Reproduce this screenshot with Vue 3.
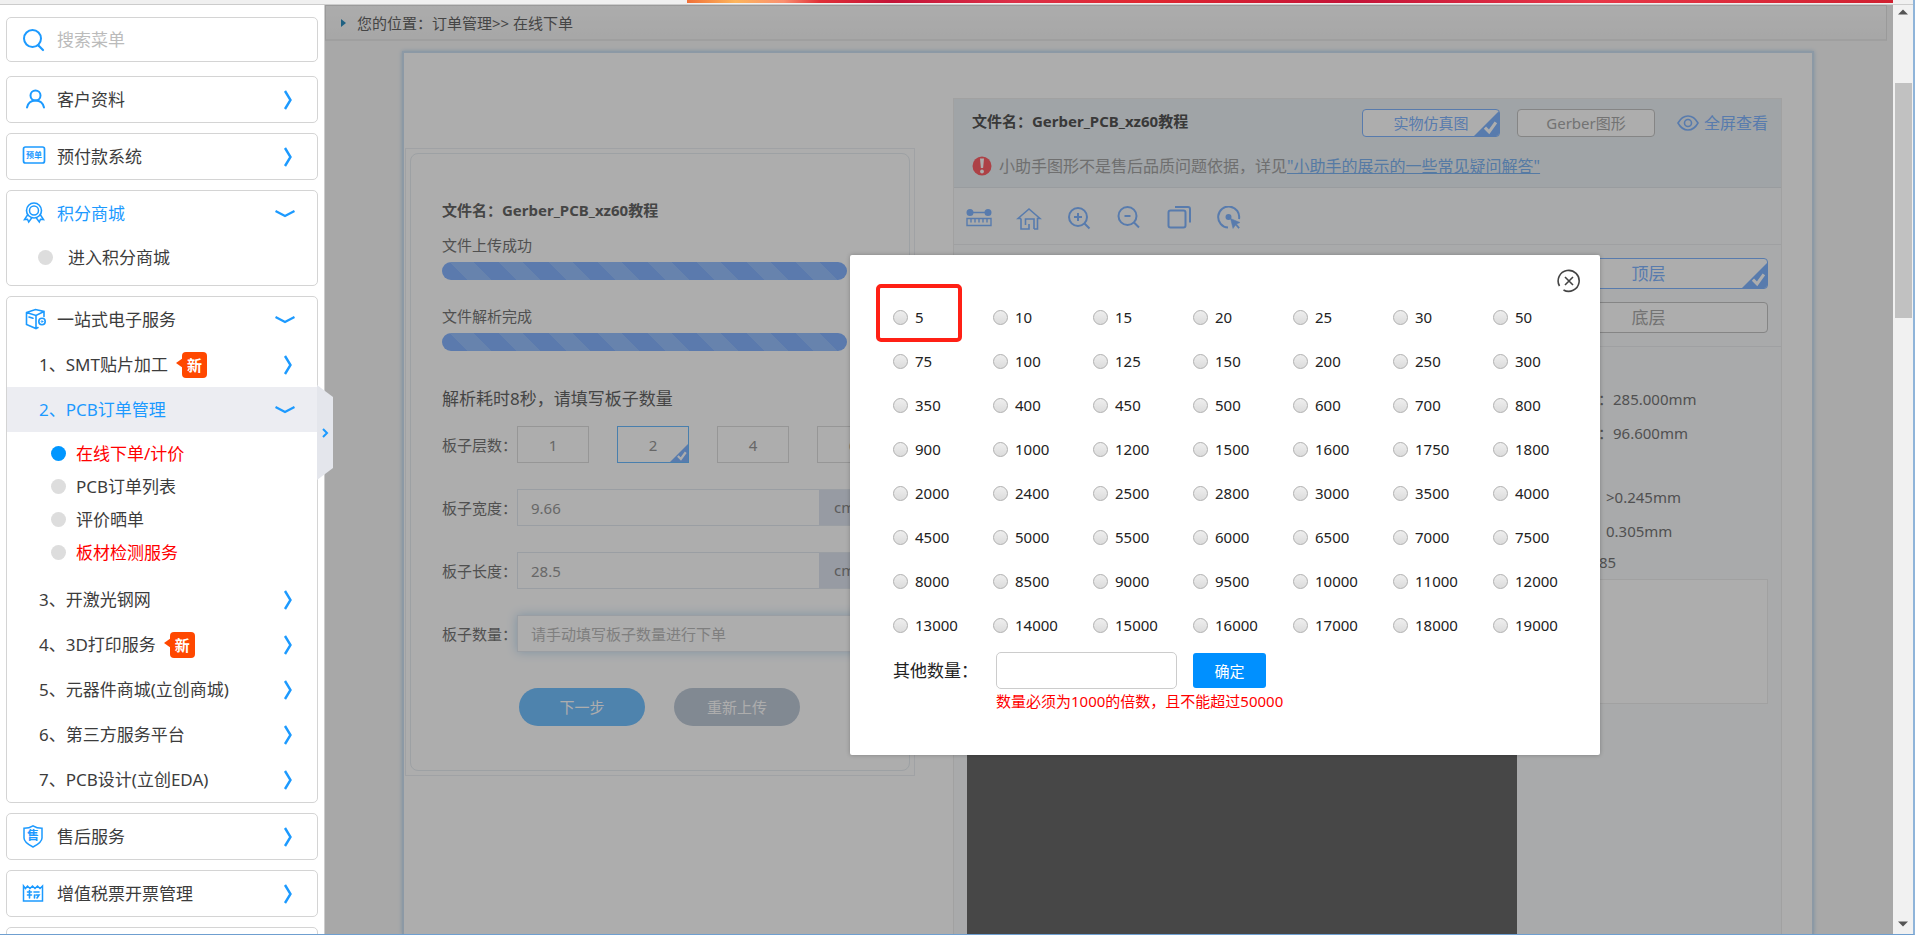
<script setup>
import { ref } from 'vue'

const keyword = ref('')
const quantity = ref(null)
const otherQuantity = ref('')
const width = ref('9.66')
const length = ref('28.5')
const boardCount = ref('')

const quantities = [
  5, 10, 15, 20, 25, 30, 50,
  75, 100, 125, 150, 200, 250, 300,
  350, 400, 450, 500, 600, 700, 800,
  900, 1000, 1200, 1500, 1600, 1750, 1800,
  2000, 2400, 2500, 2800, 3000, 3500, 4000,
  4500, 5000, 5500, 6000, 6500, 7000, 7500,
  8000, 8500, 9000, 9500, 10000, 11000, 12000,
  13000, 14000, 15000, 16000, 17000, 18000, 19000,
]

const services = [
  { text: '1、SMT贴片加工', fresh: true },
  {
    text: '2、PCB订单管理',
    open: true,
    children: [
      { text: '在线下单/计价', red: true, current: true },
      { text: 'PCB订单列表' },
      { text: '评价晒单' },
      { text: '板材检测服务', red: true },
    ],
  },
  { text: '3、开激光钢网' },
  { text: '4、3D打印服务', fresh: true },
  { text: '5、元器件商城(立创商城)' },
  { text: '6、第三方服务平台' },
  { text: '7、PCB设计(立创EDA)' },
]

const layers = [1, 2, 4, 6]
const layer = ref(2)
</script>

<template>
  <div class="app">
    <div class="strip"><div class="banner"></div></div>

    <div class="body">
      <nav class="sidebar">
        <label class="card search">
          <svg class="ico" viewBox="0 0 24 24"><circle cx="10.500" cy="10.500" r="8.500" stroke-width="2" /><path d="M16.500 17.500l4.500 4.500" stroke-width="2.200" /></svg>
          <input v-model="keyword" type="text" placeholder="搜索菜单" aria-label="搜索菜单" />
        </label>

        <div class="card">
          <button class="head">
            <svg class="ico" viewBox="0 0 24 24"><circle cx="13.500" cy="7.500" r="5" stroke-width="2" /><path d="M5 19.500c1-4.500 4.500-7 8.500-7s7.500 2.500 8.500 7" stroke-width="2" /></svg>
            <span>客户资料</span>
            <svg class="chev" viewBox="0 0 20 20"><path d="M8 1l5.500 9L8 19" /></svg>
          </button>
        </div>

        <div class="card">
          <button class="head">
            <svg class="ico" viewBox="0 0 24 24"><rect x="1.500" y="2" width="21" height="16" rx="2" stroke-width="1.700" /><text x="12" y="13" text-anchor="middle" class="glyph small">预单</text></svg>
            <span>预付款系统</span>
            <svg class="chev" viewBox="0 0 20 20"><path d="M8 1l5.500 9L8 19" /></svg>
          </button>
        </div>

        <div class="card points">
          <button class="head active">
            <svg class="ico" viewBox="0 0 24 24"><circle cx="12" cy="8.500" r="7.500" stroke-width="1.600" /><circle cx="12" cy="8.500" r="4.500" stroke-width="1.500" /><path d="M5.500 13l-3 4.500 3-.3 1.200 2.800 3.300-4.500M18.500 13l3 4.500-3-.3-1.200 2.800-3.300-4.500" stroke-width="1.500" /></svg>
            <span>积分商城</span>
            <svg class="chev down" viewBox="0 0 20 20"><path d="M.5 7l9.500 5 9.500-5" /></svg>
          </button>
          <a href="#" class="entry"><i class="dot"></i>进入积分商城</a>
        </div>

        <div class="card">
          <button class="head">
            <svg class="ico" viewBox="0 0 24 24"><path d="M4.500 4.500l9-3 8.500 2v5M4.500 4.500v12l9.500 4 2-1M4.500 4.500l9.500 3 8-4M14 7.500v12M7 9l4 1.300" stroke-width="1.600" /><circle cx="20" cy="13.500" r="3.200" stroke-width="1.600" /><circle cx="20" cy="13.500" r=".8" stroke-width="1" /></svg>
            <span>一站式电子服务</span>
            <svg class="chev down" viewBox="0 0 20 20"><path d="M.5 7l9.500 5 9.500-5" /></svg>
          </button>
          <template v-for="s in services" :key="s.text">
            <button class="item" :class="{ active: s.open }">
              <span>{{ s.text }}</span>
              <em v-if="s.fresh" class="fresh">新</em>
              <svg v-if="s.open" class="chev down" viewBox="0 0 20 20"><path d="M.5 7l9.500 5 9.500-5" /></svg>
              <svg v-else class="chev" viewBox="0 0 20 20"><path d="M8 1l5.500 9L8 19" /></svg>
            </button>
            <div v-if="s.children" class="children">
              <a v-for="c in s.children" :key="c.text" href="#" :class="{ red: c.red }">
                <i class="dot" :class="{ on: c.current }"></i>{{ c.text }}
              </a>
            </div>
          </template>
        </div>

        <div class="card">
          <button class="head">
            <svg class="ico" viewBox="0 0 24 24"><path d="M11 .8c3 2 6 2.500 9 2.500v9.700c0 4-4 6.500-9 9-5-2.500-9-5-9-9V3.300c3 0 6-.5 9-2.500z" stroke-width="1.500" /><text x="11" y="15" text-anchor="middle" class="glyph">售</text></svg>
            <span>售后服务</span>
            <svg class="chev" viewBox="0 0 20 20"><path d="M8 1l5.500 9L8 19" /></svg>
          </button>
        </div>

        <div class="card">
          <button class="head">
            <svg class="ico" viewBox="0 0 24 24"><path d="M1.500 4v15h19V4L18 6.500 15.500 4 13 6.500 10.500 4 8 6.500 5.500 4 3.500 6.500z" stroke-width="1.500" /><path d="M5.500 10h4M5.500 13h4M7.500 8.500v7.500M12 10h5M14 13h3l-2 3M12.500 13v3" stroke-width="1.600" /></svg>
            <span>增值税票开票管理</span>
            <svg class="chev" viewBox="0 0 20 20"><path d="M8 1l5.500 9L8 19" /></svg>
          </button>
        </div>

        <div class="card"><button class="head" aria-label="更多"></button></div>

        <button class="fold" aria-label="收起菜单">
          <svg viewBox="0 0 10 12"><path d="M3 2l4 4-4 4" /></svg>
        </button>
      </nav>

      <main class="main">
        <div class="crumb"><i class="tri"></i>您的位置：订单管理&gt;&gt; 在线下单</div>

        <div class="sheet">
          <section class="left">
            <form class="upload" @submit.prevent>
              <h2>文件名：Gerber_PCB_xz60教程</h2>
              <p class="state">文件上传成功</p>
              <div class="bar"></div>
              <p class="state second">文件解析完成</p>
              <div class="bar"></div>
              <p class="hint">解析耗时8秒，请填写板子数量</p>

              <div class="fields">
                <div class="row">
                  <span class="lab">板子层数：</span>
                  <div class="layers">
                    <button v-for="n in layers" :key="n" type="button" :class="{ on: n === layer }">
                      {{ n }}
                      <svg v-if="n === layer" class="tick" viewBox="0 0 24 24"><path class="fill" d="M24 0v24H0z" /><path class="mark" d="M10.500 16l4 4 6.500-9" /></svg>
                    </button>
                  </div>
                </div>
                <div class="row">
                  <label class="lab" for="bw">板子宽度：</label>
                  <div class="field"><input id="bw" v-model="width" type="text" /><span>cm</span></div>
                </div>
                <div class="row">
                  <label class="lab" for="bl">板子长度：</label>
                  <div class="field"><input id="bl" v-model="length" type="text" /><span>cm</span></div>
                </div>
                <div class="row">
                  <label class="lab" for="bc">板子数量：</label>
                  <div class="field glow"><input id="bc" v-model="boardCount" type="text" placeholder="请手动填写板子数量进行下单" /></div>
                </div>
              </div>

              <div class="actions">
                <button class="next">下一步</button>
                <button type="button" class="again">重新上传</button>
              </div>
            </form>
          </section>

          <section class="panel">
            <header>
              <div class="line">
                <h2>文件名：Gerber_PCB_xz60教程</h2>
                <div class="tabs">
                  <button class="tab on">实物仿真图<svg class="tick" viewBox="0 0 24 24"><path class="fill" d="M24 0v24H0z" /><path class="mark" d="M10.500 16l4 4 6.500-9" /></svg></button>
                  <button class="tab">Gerber图形</button>
                </div>
                <a href="#" class="full">
                  <svg viewBox="0 0 22 18"><path d="M1 9c2.500-4.500 6-7 10-7s7.500 2.500 10 7c-2.500 4.500-6 7-10 7S3.500 13.500 1 9z" /><circle cx="11" cy="9" r="3.500" /></svg>全屏查看
                </a>
              </div>
              <p class="note">
                <svg viewBox="0 0 20 20"><circle cx="10" cy="10" r="9.500" /><path d="M8 2.500h4l-.9 9.500H8.900z" /><circle class="pt" cx="10" cy="15.500" r="1.900" /></svg>
                <span>小助手图形不是售后品质问题依据，详见<a href="#">"小助手的展示的一些常见疑问解答"</a></span>
              </p>
            </header>

            <div class="tools">
              <button aria-label="测量"><svg viewBox="0 0 26 26"><path d="M4 6.500h18M1 12.500h24v7H1zM5 13v3.500M9 13v3.500M13 13v3.500M17 13v3.500M21 13v3.500" stroke-width="1.400" /><circle class="solid" cx="4" cy="6.500" r="2.500" /><circle class="solid" cx="22" cy="6.500" r="2.500" /></svg></button>
              <button aria-label="主页"><svg viewBox="0 0 26 26"><path d="M5 12.500H2L13 3l11 9.500h-2.500V23H18M5 12.500V23h8v-5M9.500 19v-6H18v10" stroke-width="1.600" /></svg></button>
              <button aria-label="放大"><svg viewBox="0 0 26 26"><circle cx="12" cy="11" r="9" /><path d="M18.500 17.500l5 5M12 7v8M8 11h8" /></svg></button>
              <button aria-label="缩小"><svg viewBox="0 0 26 26"><circle cx="11.500" cy="10" r="9" /><path d="M18 16.500l5 5M8.500 10h6" /></svg></button>
              <button aria-label="图层"><svg viewBox="0 0 26 26"><rect x="2.500" y="4.500" width="17" height="17" rx="2" /><path d="M9 1h13a2 2 0 0 1 2 2v13.500" /></svg></button>
              <button aria-label="选择"><svg viewBox="0 0 26 26"><path d="M23 13A10.500 10.500 0 1 0 12 21.500" /><circle class="solid" cx="12.500" cy="11" r="2" /><path class="solid" d="M14.500 12.500l2.500 10 2.500-3.500 3 3.500 1-1-3-3.500 3.500-1.500z" stroke-width=".5" /></svg></button>
            </div>

            <div class="view">
              <div class="canvas"></div>
              <aside>
                <div class="sides">
                  <button class="tab on">顶层<svg class="tick" viewBox="0 0 24 24"><path class="fill" d="M24 0v24H0z" /><path class="mark" d="M10.500 16l4 4 6.500-9" /></svg></button>
                  <button class="tab">底层</button>
                </div>
                <dl class="size">
                  <div><dt>长度：</dt><dd>285.000mm</dd></div>
                  <div><dt>宽度：</dt><dd>96.600mm</dd></div>
                </dl>
                <dl class="spec">
                  <div><dt>线宽：</dt><dd>&gt;0.245mm</dd></div>
                  <div><dt>孔径：</dt><dd>0.305mm</dd></div>
                  <div class="count"><dt>孔数：</dt><dd>85</dd></div>
                </dl>
                <div class="memo"></div>
              </aside>
            </div>
          </section>
        </div>
        <div class="shade"></div>
      </main>

      <div class="scroll">
        <svg viewBox="0 0 10 6"><path d="M0 5.500l5-5 5 5z" /></svg>
        <div class="thumb"></div>
        <svg viewBox="0 0 10 6"><path d="M0 .5l5 5 5-5z" /></svg>
      </div>
    </div>

    <form class="dialog" role="dialog" aria-label="板子数量" @submit.prevent>
      <button type="button" class="close" aria-label="关闭">
        <svg viewBox="0 0 24 24"><path d="M2.500 17A10.500 10.500 0 1 1 6.500 21" /><path d="M8 8l8 8M16 8l-8 8" /></svg>
      </button>
      <div class="grid">
        <label v-for="q in quantities" :key="q" :class="{ marked: q === 5 }">
          <input v-model="quantity" type="radio" name="quantity" :value="q" /><span>{{ q }}</span>
        </label>
      </div>
      <div class="other">
        <label for="oq">其他数量：</label>
        <input id="oq" v-model="otherQuantity" type="text" />
        <button>确定</button>
      </div>
      <p class="warn">数量必须为1000的倍数，且不能超过50000</p>
    </form>
  </div>
</template>

<style>
body {
  margin: 0;
  overflow: hidden;
}
</style>

<style scoped>
*,
*::before {
  box-sizing: border-box;
}
.app {
  position: relative;
  display: flex;
  flex-direction: column;
  height: 100vh;
  overflow: hidden;
  border-right: 2px solid #8fb4d9;
  border-bottom: 1px solid #6f9fd0;
  font: 15px/24px "Noto Sans", "Noto Sans CJK SC", sans-serif;
  color: #3c3c3c;
  background: #fff;
}
button,
input {
  font: inherit;
  color: inherit;
  margin: 0;
}
button {
  padding: 0;
  border: 0;
  background: none;
}
a {
  color: inherit;
  text-decoration: none;
}
p,
h2,
dl,
dd {
  margin: 0;
}
svg {
  display: block;
  flex: none;
  fill: none;
}

.strip {
  flex: none;
  display: flex;
  justify-content: flex-end;
  height: 5px;
  padding-right: 20px;
  background: #f0f0f0;
  border-bottom: 1px solid #ccc;
}
.banner {
  flex: none;
  width: calc(100% - 687px);
  height: 3px;
  background: linear-gradient(90deg, #f07038, #fdb55c 4%, #fa9070 8%, #e03038 11%, #c41438 17%, #dc3048 27%, #e02830 38%, #c41438 55%, #e83848 75%, #d02030);
}
.body {
  flex: 1;
  display: flex;
  min-height: 0;
}

.sidebar {
  position: relative;
  flex: none;
  display: flex;
  flex-direction: column;
  gap: 10px;
  width: 325px;
  padding: 12px 6px 0;
  border-right: 1px solid #ccc;
  font-size: 17px;
}
.card {
  flex: none;
  border: 1px solid #d4d4d4;
  border-radius: 5px;
}
.search {
  display: flex;
  align-items: center;
  height: 45px;
  margin-bottom: 4px;
  padding-left: 15px;
}
.search input {
  flex: 1;
  min-width: 0;
  padding: 0;
  border: 0;
  outline: 0;
}
.search input::placeholder {
  color: #bbb;
}
.search .ico,
.head .ico {
  width: 24px;
  height: 24px;
  margin-right: 11px;
}
.ico {
  stroke: #1c9aff;
  stroke-linecap: round;
}
.glyph {
  fill: #1c9aff;
  stroke: none;
  font-size: 12px;
  font-weight: bold;
}
.glyph.small {
  font-size: 8px;
}
.head,
.item {
  display: flex;
  align-items: center;
  width: 100%;
  height: 45px;
  padding: 0 20px 0 15px;
  text-align: left;
}
.item {
  padding-left: 32px;
}
.active {
  color: #1c9aff;
}
.item.active {
  background: #ecedf2;
}
.chev {
  width: 20px;
  height: 20px;
  margin-left: auto;
  stroke: #1c9aff;
  stroke-width: 2.4;
}
.chev.down {
  margin-right: 2px;
}
.dot {
  width: 15px;
  height: 15px;
  border-radius: 50%;
  background: #ddd;
}
.dot.on {
  background: #0096ff;
}
.points {
  padding-bottom: 6px;
}
.entry {
  display: flex;
  align-items: center;
  gap: 15px;
  height: 43px;
  padding-left: 31px;
}
.fresh {
  position: relative;
  width: 25px;
  height: 26px;
  margin-left: 14px;
  border-radius: 4px;
  background: #ff4800;
  color: #fff;
  font: bold 15px/26px "Noto Sans CJK SC", sans-serif;
  text-align: center;
}
.fresh::before {
  content: "";
  position: absolute;
  top: 6px;
  left: -6px;
  border: solid transparent;
  border-width: 5px 7px 5px 0;
  border-right-color: #ff4800;
}
.children {
  padding: 5px 0 8px 44px;
}
.children a {
  display: flex;
  align-items: center;
  gap: 10px;
  height: 33px;
}
.children .red {
  color: #f00;
}
.fold {
  position: absolute;
  z-index: 2;
  top: 380px;
  right: -9px;
  display: grid;
  place-items: center;
  width: 16px;
  height: 95px;
  background: #e4e6ec;
  clip-path: polygon(0 0, 100% 12px, 100% 83px, 0 100%);
}
.fold svg {
  width: 10px;
  height: 12px;
  stroke: #1c9aff;
  stroke-width: 2;
}

.main {
  position: relative;
  flex: 1;
  min-width: 0;
  display: flex;
  flex-direction: column;
  background: #f8f8f8;
}
.shade {
  position: absolute;
  inset: 0;
  background: rgba(0, 0, 0, 0.32);
}
.crumb {
  flex: none;
  display: flex;
  align-items: center;
  height: 36px;
  margin-right: 6px;
  padding-left: 15px;
  border: 1px solid #e4e4e4;
  border-bottom: 2px solid #ebebeb;
  background: linear-gradient(#fefefe, #f6f6f6);
  color: #666;
}
.tri {
  margin-right: 11px;
  border: solid transparent;
  border-width: 4px 0 4px 5px;
  border-left-color: #2f8fc0;
}
.sheet {
  flex: 1;
  display: flex;
  align-items: stretch;
  min-height: 0;
  margin: 10px 79px 0 77px;
  padding: 0 30px 0 1px;
  border: 2px solid #cfe2f4;
  border-bottom: 0;
  box-shadow: 0 0 4px #b9d5ee;
  background: #fff;
  color: #777;
}
.left {
  flex: none;
  align-self: flex-start;
  width: 510px;
  margin-top: 95px;
  padding: 4px;
  border: 1px solid #eceff4;
}
.upload {
  padding: 44px 30px 44px 31px;
  border: 1px solid #e8edf2;
  border-radius: 8px;
}
h2 {
  font-size: 15px;
  line-height: 24px;
  color: #666;
}
.state {
  margin: 11px 0 5px;
}
.state.second {
  margin-top: 24px;
}
.bar {
  width: 405px;
  height: 18px;
  border-radius: 9px;
  background: repeating-linear-gradient(45deg, #86b4ff 0 18px, #99c1ff 18px 35px);
}
.hint {
  margin: 36px 0 15px;
  font-size: 17px;
  color: #666;
}
.fields {
  display: flex;
  flex-direction: column;
  gap: 26px;
}
.row {
  display: flex;
  align-items: center;
  height: 37px;
}
.lab {
  flex: none;
  width: 75px;
}
.layers {
  display: flex;
  gap: 28px;
}
.layers button {
  position: relative;
  width: 72px;
  height: 37px;
  border: 1px solid #ddd;
  color: #999;
}
.layers .on {
  border-color: #6cbcff;
}
.tick {
  position: absolute;
  right: 0;
  bottom: 0;
  width: 18px;
  height: 18px;
}
.tick .fill {
  fill: #82b6ff;
}
.tick .mark {
  stroke: #fff;
  stroke-width: 3;
}
.field {
  display: flex;
  width: 363px;
  height: 37px;
  border: 1px solid #e3e9f0;
}
.field input {
  flex: 1;
  min-width: 0;
  padding: 0 13px;
  border: 0;
  outline: 0;
  background: #fff;
  color: #999;
}
.field input::placeholder {
  color: #bbb;
}
.field span {
  width: 59px;
  padding-left: 15px;
  line-height: 35px;
  background: #dfe5f0;
  color: #888;
}
.field.glow {
  box-shadow: 0 0 10px #bcd8f0;
}
.actions {
  display: flex;
  gap: 29px;
  margin-top: 36px;
  padding-left: 77px;
}
.actions button {
  width: 126px;
  height: 38px;
  border-radius: 19px;
  background: #73c1ff;
  color: #fff;
}
.actions .again {
  background: #bfcad8;
}

.panel {
  flex: 1;
  min-width: 0;
  display: flex;
  flex-direction: column;
  margin: 45px 0 0 38px;
  border: 1px solid #eee;
  border-bottom: 0;
  background: #f9fbfd;
}
.panel header {
  flex: none;
  height: 89px;
  padding: 10px 13px 0 18px;
  border-bottom: 1px solid #e2e6ea;
  background: #ecf2f6;
}
.panel h2 {
  align-self: flex-start;
  color: #555;
}
.line {
  display: flex;
  align-items: center;
  height: 28px;
}
.tabs {
  display: flex;
  gap: 17px;
  margin-left: auto;
}
.tab {
  position: relative;
  width: 138px;
  height: 28px;
  border: 1px solid #c4c4c4;
  border-radius: 4px;
  overflow: hidden;
  background: #fff;
  color: #aaa;
}
.tab.on {
  border-color: #82b6ff;
  color: #82b6ff;
}
.tab .tick {
  width: 25px;
  height: 25px;
}
.full {
  display: flex;
  align-items: center;
  gap: 5px;
  margin-left: 22px;
  font-size: 16px;
  color: #82b6ff;
}
.full svg {
  width: 22px;
  height: 18px;
  stroke: #82b6ff;
  stroke-width: 1.6;
}
.note {
  display: flex;
  align-items: center;
  gap: 7px;
  margin-top: 17px;
  font-size: 16px;
  line-height: 24px;
  color: #a4a4a4;
}
.note svg {
  width: 20px;
  height: 20px;
  fill: #fff;
}
.note svg circle:first-child {
  fill: #ff6068;
}
.note a {
  color: #7eb4f2;
  text-decoration: underline;
}
.tools {
  flex: none;
  display: flex;
  align-items: center;
  gap: 24px;
  height: 57px;
  padding: 6px 0 0 12px;
  border-bottom: 1px solid #eaecef;
}
.tools svg {
  width: 26px;
  height: 26px;
  stroke: #82b6ff;
  stroke-width: 2;
}
.solid {
  fill: #82b6ff;
}
.view {
  flex: 1;
  display: flex;
  min-height: 0;
}
.canvas {
  flex: 1;
  margin: 12px 12px 0 13px;
  background: #696969;
}
aside {
  width: 252px;
}
.sides {
  display: flex;
  flex-direction: column;
  gap: 13px;
  padding: 13px 13px 13px 0;
  border-bottom: 1px solid #eaecef;
}
.sides .tab {
  width: 100%;
  height: 31px;
  font-size: 17px;
}
dl > div {
  display: flex;
  height: 34px;
  line-height: 34px;
}
dt {
  flex: none;
  width: 77px;
  text-align: right;
}
.size {
  padding-top: 35px;
}
.size dt {
  width: 84px;
}
.spec {
  padding-top: 30px;
}
.spec .count {
  height: 31px;
  line-height: 28px;
}
.count dt {
  width: 70px;
}
.memo {
  height: 125px;
  margin-right: 13px;
  border: 1px solid #eee;
  background: #fff;
}

.scroll {
  flex: none;
  display: flex;
  flex-direction: column;
  align-items: center;
  width: 20px;
  padding: 4px 0 7px;
  background: #f1f1f1;
}
.scroll svg {
  width: 10px;
  height: 6px;
  fill: #555;
}
.thumb {
  width: 17px;
  height: 235px;
  margin: 68px 0 auto;
  background: #c1c1c1;
}

.dialog {
  position: absolute;
  z-index: 5;
  top: 255px;
  left: 850px;
  width: 750px;
  padding: 40px 8px 42px 43px;
  border-radius: 2px;
  background: #fff;
  box-shadow: 0 0 4px rgba(0, 0, 0, 0.25);
  color: #222;
}
.close {
  position: absolute;
  top: 14px;
  right: 19px;
}
.close svg {
  width: 24px;
  height: 24px;
  stroke: #444;
  stroke-width: 1.6;
}
.grid {
  display: grid;
  grid-template-columns: repeat(7, 100px);
  grid-auto-rows: 44px;
}
.grid label {
  position: relative;
  display: flex;
  align-items: center;
  gap: 7px;
}
.grid input {
  appearance: none;
  width: 15px;
  height: 15px;
  border: 1px solid #b0b0b0;
  border-radius: 50%;
  background: linear-gradient(#eee, #dcdcdc);
}
.marked::before {
  content: "";
  position: absolute;
  top: -11px;
  left: -17px;
  width: 86px;
  height: 58px;
  border: 4px solid #ff2015;
  border-radius: 5px;
}
.other {
  display: flex;
  align-items: center;
  margin-top: 5px;
}
.other label {
  width: 103px;
  font-size: 17px;
}
.other input {
  width: 181px;
  height: 37px;
  padding: 0 8px;
  border: 1px solid #ccc;
  border-radius: 5px;
}
.other button {
  width: 73px;
  height: 35px;
  margin-left: 16px;
  border-radius: 3px;
  background: #0090ff;
  color: #fff;
}
.warn {
  padding-left: 103px;
  color: #f00;
}
</style>
